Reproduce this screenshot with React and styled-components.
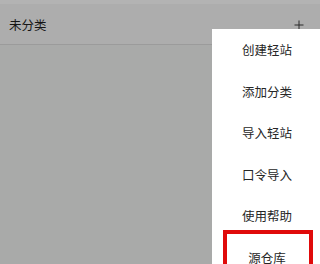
import React from "react";
import styled, { createGlobalStyle } from "styled-components";

const Global = createGlobalStyle`
  html, body { margin: 0; padding: 0; }
  body {
    width: 320px; height: 264px; overflow: hidden;
    font-family: "Noto Sans CJK SC", "Noto Sans", sans-serif;
    background: #a9aaa9;
  }
`;

const Page = styled.div`
  position: relative;
  width: 320px;
  height: 264px;
  display: flex;
  flex-direction: column;
  background: #a9aaa9;
  overflow: hidden;
`;

const TopStrip = styled.div`
  height: 4px;
  background: #b3b3b3;
`;

const Header = styled.div`
  height: 40px;
  display: flex;
  align-items: center;
  justify-content: space-between;
  padding: 0 16px 0 9px;
  background: #adadad;
  border-bottom: 1px solid #9b9b9b;
`;

const Title = styled.span`
  font-size: 12.5px;
  color: #151515;
  line-height: 1;
  margin-top: 2px;
`;

const Plus = styled.svg`
  width: 10px;
  height: 10px;
  margin-top: 2px;
`;

const Menu = styled.div`
  position: absolute;
  left: 212px;
  top: 29px;
  width: 110px;
  background: #ffffff;
  display: flex;
  flex-direction: column;
`;

const Item = styled.div`
  position: relative;
  height: 41.5px;
  display: flex;
  align-items: center;
  justify-content: center;
  font-size: 12.5px;
  color: #262626;
`;

const Highlight = styled.div`
  position: absolute;
  left: 11px;
  top: -7px;
  width: 90px;
  height: 60px;
  border: 4px solid #e00a0a;
  box-sizing: border-box;
  pointer-events: none;
`;

const items = ["创建轻站", "添加分类", "导入轻站", "口令导入", "使用帮助", "源仓库"];

export default function App() {
  return (
    <Page>
      <Global />
      <TopStrip />
      <Header>
        <Title>未分类</Title>
        <Plus viewBox="0 0 10 10">
          <path d="M5 0.5V9.5M0.5 5H9.5" stroke="#2a2a2a" strokeWidth="1" fill="none" />
        </Plus>
      </Header>
      <Menu>
        {items.map((t, i) => (
          <Item key={t}>
            {i === items.length - 1 && <Highlight />}
            {t}
          </Item>
        ))}
      </Menu>
    </Page>
  );
}
